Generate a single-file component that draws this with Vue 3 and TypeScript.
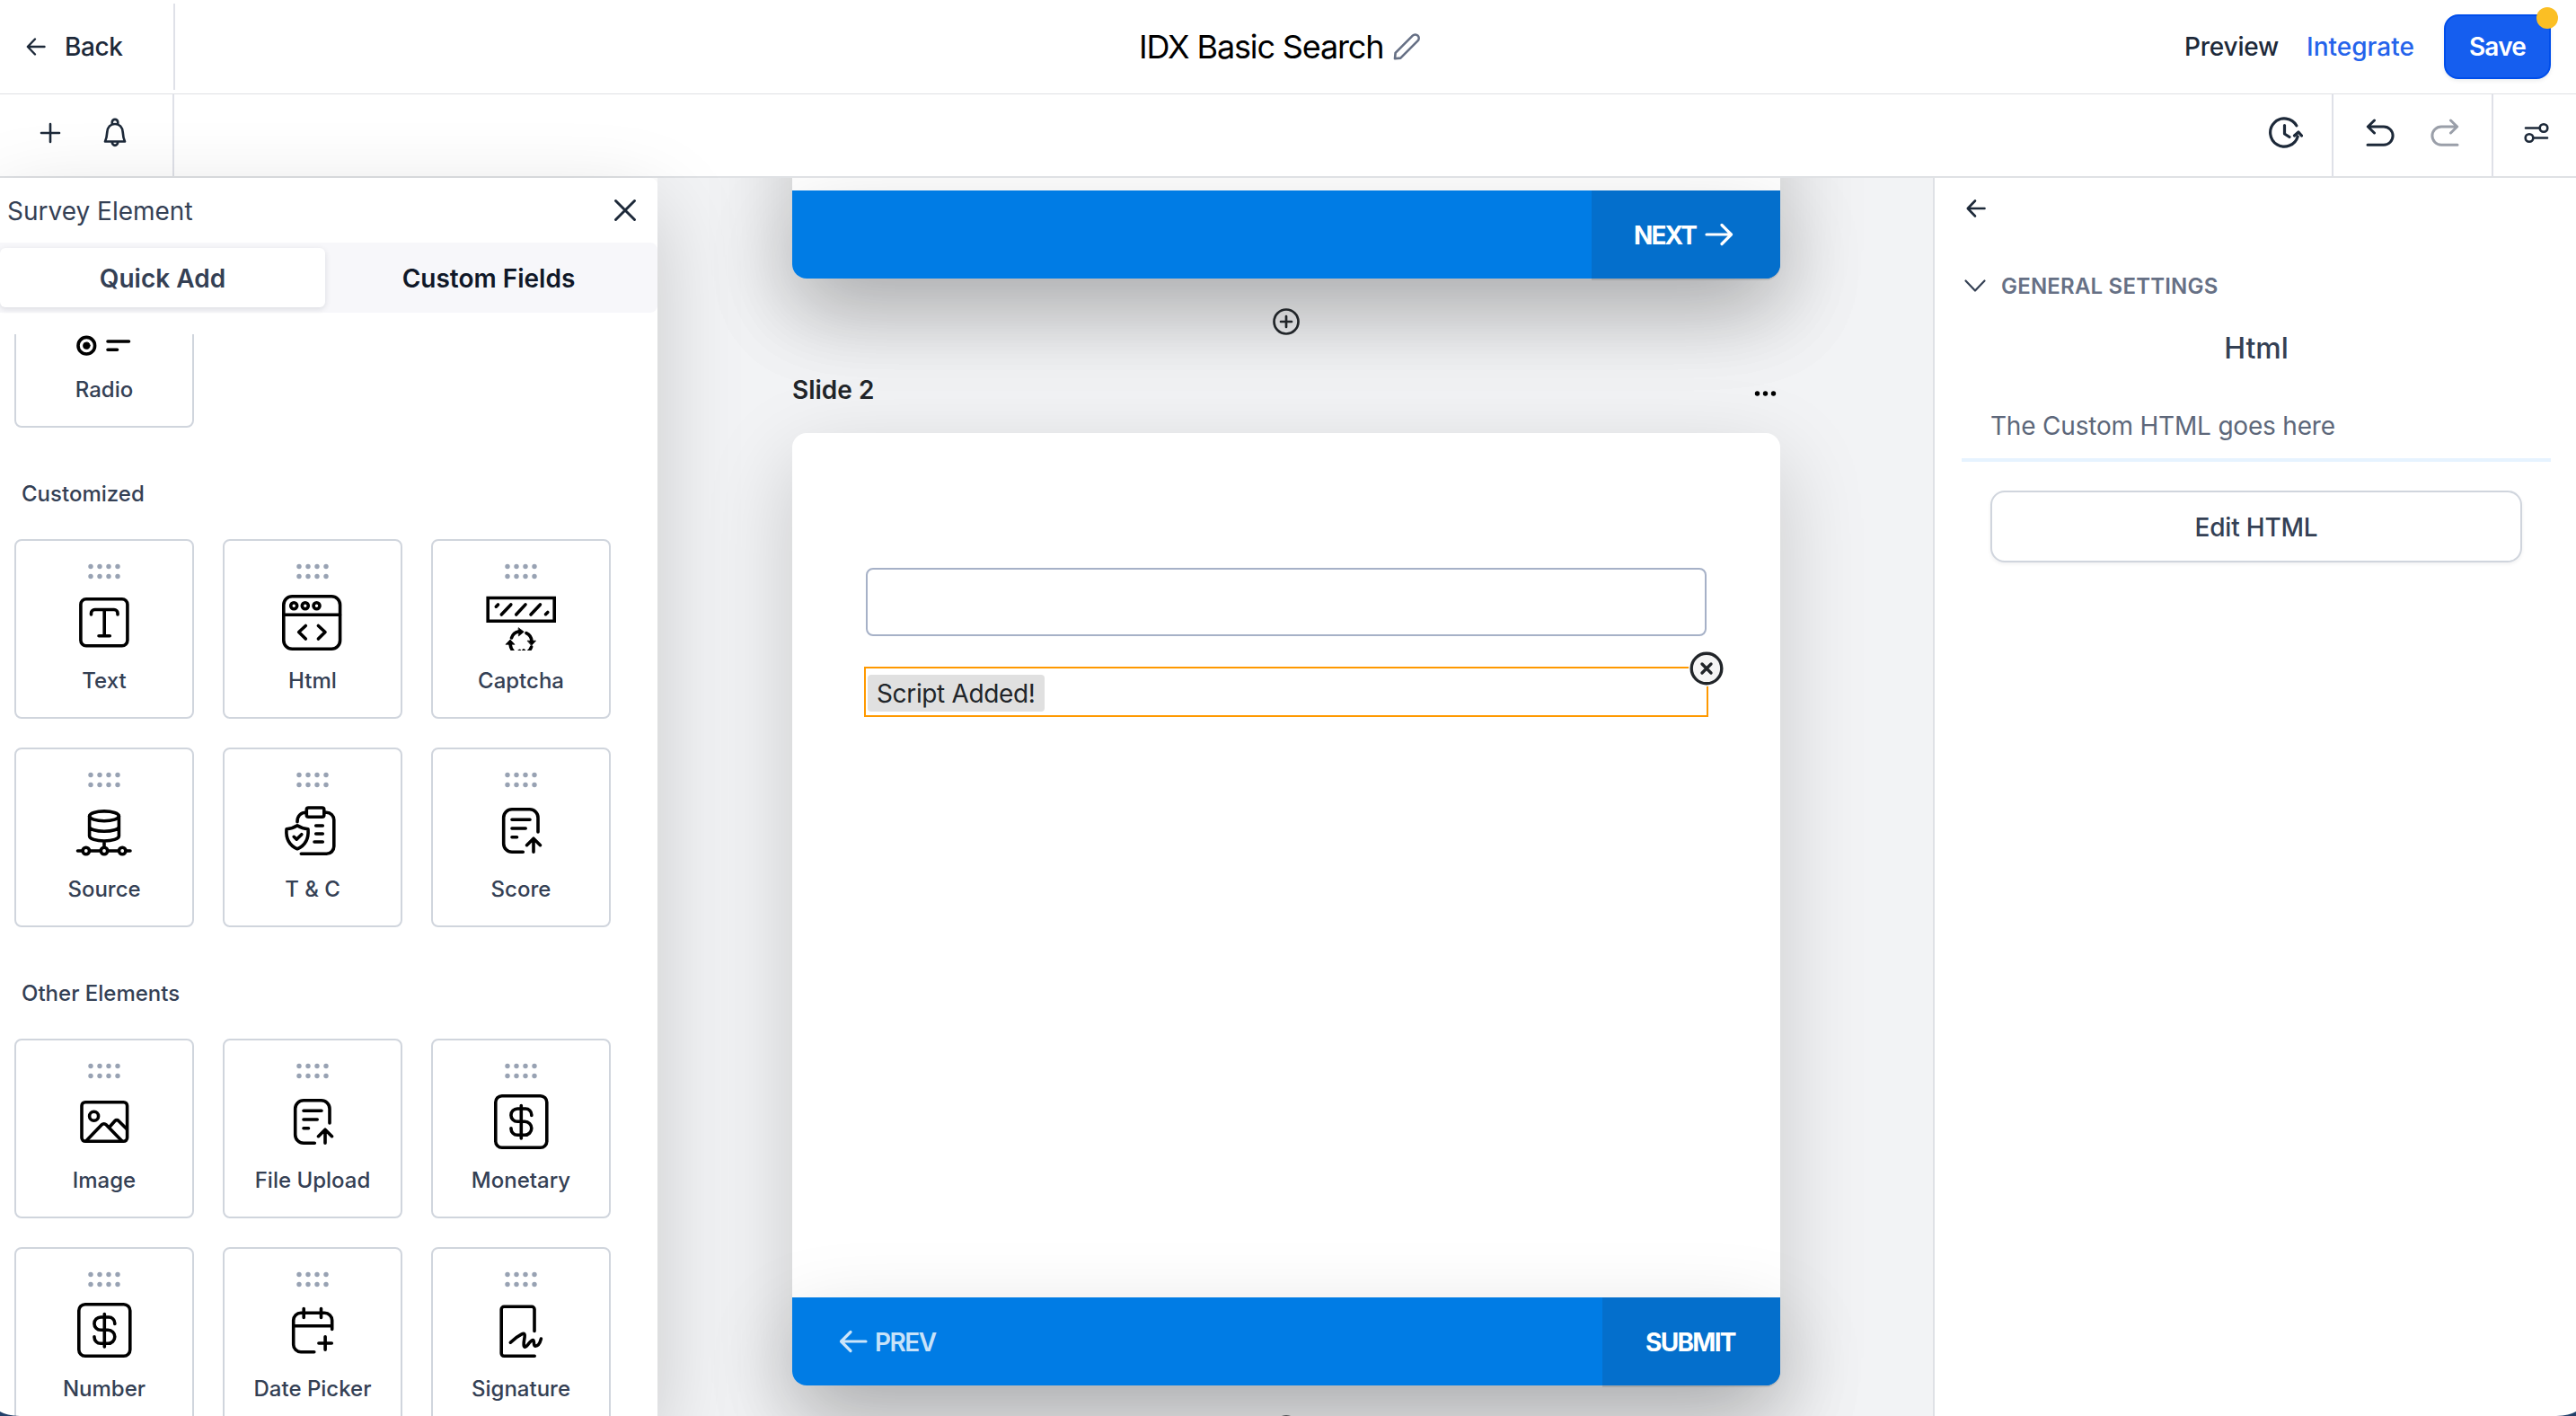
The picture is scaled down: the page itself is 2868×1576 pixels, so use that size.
<script setup lang="ts">
type Tile = { label: string; icon: string }
type Group = { title: string; tiles: Tile[] }

const doc =
  '<path d="M119 94V78a9.3 9.3 0 0 0-9.3-9.3H90a9.3 9.3 0 0 0-9.3 9.3v29a9.3 9.3 0 0 0 9.3 9.3h12.3M90 80.3h20M90 90h15.200M90 99.700h5.500M114 116.300V101.500M106.500 108.700l7.500-7.500 7.500 7.500"/>'
const dollar =
  '<rect x="71.800" y="63.700" width="57" height="57.500" rx="7"/><path d="M100.300 74.500v36.500M111.800 85.500v-.8a6.700 6.700 0 0 0-6.700-6.700h-9a7.150 7.150 0 0 0 0 14.300h8.200a7.500 7.500 0 0 1 0 15H96a7 7 0 0 1-7-7v-.6"/>'

const icons: Record<string, string> = {
  radio:
    '<circle cx="80.300" cy="108.700" r="9.300"/><circle cx="80.300" cy="108.700" r="3.800" class="solid"/><path d="M104 104h23.500M104 113.200h10.500"/>',
  text: '<rect x="73.900" y="66.800" width="52" height="52" rx="6"/><path d="M85.500 84v-1.500a4 4 0 0 1 4-4h21.500a4 4 0 0 1 4 4V84M100.200 78.500v29M94 107.700h12.300"/>',
  html: '<rect x="67.800" y="63.800" width="62.800" height="58.400" rx="9.500"/><path d="M68 84.300h62.500M92.300 96.500l-7.600 7 7.600 7.600M106.400 96.500l7.600 7-7.600 7.600"/><circle cx="79.200" cy="74.300" r="3.500"/><circle cx="91.800" cy="74.300" r="3.500"/><circle cx="104.500" cy="74.300" r="3.500"/>',
  captcha:
    '<path stroke-linejoin="miter" d="M63.200 65.500h74v25.700h-74z"/><path d="M88.800 72.900 78.300 84M105 72.900 94.700 84M121.400 72.900 111 84M74.500 73l-2.200 2.200M129.800 81.500l-2.300 2.200"/><path d="M89.500 110c1.200-4 4.200-6.500 8.500-7.300M106 104.600c3.600 1.700 5.700 4.700 6 8.900M88 117c.4 3.500 1.800 6.300 4.300 9M111.600 120c-.8 2.400-2.200 4.200-4 5.600M98.500 124.500l-2 1.500M103 124l1 1" /><path class="solid" stroke-width="1" stroke-linejoin="round" d="M97.500 98.900l5.700 4.300-5.500 4.500zM107.500 113.200h9l-4.700 5zM83.300 117l4.700-5 4.700 5z"/>',
  source:
    '<ellipse cx="100" cy="76.300" rx="16.400" ry="5.400"/><path d="M83.600 76.300V98.500c0 3.100 7.300 5.500 16.400 5.500s16.400-2.400 16.400-5.500V76.300M83.600 88c0 3.100 7.300 5.200 16.400 5.200s16.400-2.100 16.400-5.200M100 104v6.500M70.500 115h5.300M83.700 115h12.200M104 115h12.100M124 115h5"/><circle cx="79.800" cy="115" r="3.700"/><circle cx="100" cy="115" r="3.700"/><circle cx="120.200" cy="115" r="3.700"/>',
  terms:
    '<rect x="93.300" y="67" width="19.500" height="10.200" rx="2.200"/><path d="M93 72.300c-6 0-10 3.800-10 10.400M113 72.300h2.500a8.300 8.300 0 0 1 8.300 8.300V110a8.300 8.300 0 0 1-8.300 8.300H87.300M103.700 87h7.600M103.700 96h7.600M102 105h9.300M83 86.800c3.700 2.400 7.700 3.700 12 4 .9 10.500-2.300 17.700-12 22-9.700-4.300-12.900-11.500-12-22 4.300-.3 8.300-1.600 12-4zM79.200 99.300l3 2.900 5.600-5.500"/>',
  doc,
  image:
    '<rect x="75" y="70.700" width="50.600" height="43.600" rx="4"/><circle cx="88.600" cy="86.300" r="5"/><path d="M80 113.800 97.300 95.800a3.300 3.300 0 0 1 4.800 0L119.600 113.800M105.800 98.500l6.200-7a2.700 2.700 0 0 1 4 0l9 9"/>',
  dollar,
  date: '<path d="M121.700 91.500V81.600a8.300 8.300 0 0 0-8.300-8.300H87a8.300 8.300 0 0 0-8.300 8.300v26.800a8.300 8.300 0 0 0 8.300 8.300h14.800M79 87.700h42.500M90.200 68.500v10M109.500 68.500v10M114.100 99.800v14.400M106.900 107h14.400"/>',
  sign: '<path d="M115 93.500V69.300a3 3 0 0 0-3-3H81.200a3 3 0 0 0-3 3v49a3 3 0 0 0 3 3H115.200M88.300 106.200c5-5 9-7.600 12.600-9.400 3-1.400 3.700.3 3.200 3.500-.6 4-1.500 7.300-.7 9.800.7 2.200 2.600.6 4.300-1.500 2.500-3.100 4.200-5.400 5.700-5.100 2 .5 0 6.500 2.500 6.600 3.200.1 5.500-4.200 6.500-8"/>',
}

const groups: Group[] = [
  {
    title: 'Customized',
    tiles: [
      { label: 'Text', icon: 'text' },
      { label: 'Html', icon: 'html' },
      { label: 'Captcha', icon: 'captcha' },
      { label: 'Source', icon: 'source' },
      { label: 'T & C', icon: 'terms' },
      { label: 'Score', icon: 'doc' },
    ],
  },
  {
    title: 'Other Elements',
    tiles: [
      { label: 'Image', icon: 'image' },
      { label: 'File Upload', icon: 'doc' },
      { label: 'Monetary', icon: 'dollar' },
      { label: 'Number', icon: 'dollar' },
      { label: 'Date Picker', icon: 'date' },
      { label: 'Signature', icon: 'sign' },
    ],
  },
]
const dots = [0, 1, 2, 3]
</script>

<template>
  <div class="app">
    <header class="header">
      <div class="back">
        <svg width="22" height="24" viewBox="0 0 22 24" class="ln"><path d="M20.500 12H2M10 3.500 1.800 12l8.200 8.500" stroke-width="2.400" /></svg>
        <span>Back</span>
      </div>
      <div class="title">
        <span>IDX Basic Search</span>
        <svg width="32" height="32" viewBox="0 0 32 32" class="ln pencil"><path d="M3 29.300l.6-6.400L22.800 3.700a4 4 0 0 1 5.700 5.700L9.300 28.600z" stroke-width="2.600" /></svg>
      </div>
      <nav class="actions">
        <span class="preview">Preview</span>
        <span class="integrate">Integrate</span>
        <button class="save">Save<i class="badge"></i></button>
      </nav>
    </header>

    <div class="toolbar">
      <div class="tools-left">
        <svg width="24" height="24" viewBox="0 0 24 24" class="ln"><path d="M12 2v20M2 12h20" stroke-width="2.600" /></svg>
        <svg width="28" height="34" viewBox="0 0 28 34" class="ln">
          <path d="M3 26.500c1.700-3.500 2-6 2.300-10.500C5.800 10.500 9 7 14 7s8.200 3.500 8.700 9c.3 4.500.6 7 2.300 10.500zM10.800 7.500V5a3.200 3.200 0 0 1 6.400 0v2.500M10.800 27a3.200 3.800 0 0 0 6.400 0" stroke-width="2.700" />
        </svg>
      </div>
      <div class="tools-right">
        <div class="cell history">
          <svg width="40" height="40" viewBox="0 0 40 40" class="ln"><path d="M32.800 11.800A15.600 15.600 0 1 0 34.200 24M19.500 11.500v9.500l5.500 3.500M30.500 23l4.500-4 3.500 4" stroke-width="3.200" /></svg>
        </div>
        <div class="cell undo">
          <svg width="32" height="32" viewBox="0 0 32 32" class="ln"><path d="M9.500 2 2.300 9l7.200 7M2.500 9H20a10 10 0 0 1 0 20.200H2" stroke-width="3" /></svg>
          <svg width="32" height="32" viewBox="0 0 32 32" class="ln faded"><path d="M22.500 2l7.200 7-7.200 7M29.500 9H12a10 10 0 0 0 0 20.200h18" stroke-width="3" /></svg>
        </div>
        <div class="cell sliders">
          <svg width="28" height="24" viewBox="0 0 28 24" class="ln"><path d="M2 6.500h15M11 17.500h15" stroke-width="2.600" /><circle cx="22" cy="6.500" r="4.300" stroke-width="2.600" /><circle cx="6" cy="17.500" r="4.300" stroke-width="2.600" /></svg>
        </div>
      </div>
    </div>

    <main class="body">
      <aside class="sidebar">
        <div class="side-head">
          <span>Survey Element</span>
          <svg width="28" height="28" viewBox="0 0 28 28" class="ln"><path d="M3.500 3.500l21 21M24.500 3.500l-21 21" stroke-width="3" /></svg>
        </div>
        <div class="tabs">
          <div class="tab active">Quick Add</div>
          <div class="tab">Custom Fields</div>
        </div>
        <div class="palette">
          <div class="tiles first">
            <div class="tile">
              <svg class="glyph" width="120" height="124" viewBox="40 0 120 124" v-html="icons.radio"></svg>
              <span>Radio</span>
            </div>
          </div>
          <section v-for="g in groups" :key="g.title">
            <h3>{{ g.title }}</h3>
            <div class="tiles">
              <div v-for="t in g.tiles" :key="t.label" class="tile">
                <svg class="grip" width="40" height="18" viewBox="0 0 40 18">
                  <template v-for="d in dots" :key="d">
                    <circle :cx="5 + d * 10" cy="3.500" r="2.700" />
                    <circle :cx="5 + d * 10" cy="14.500" r="2.700" />
                  </template>
                </svg>
                <svg class="glyph" width="120" height="76" viewBox="40 48 120 76" v-html="icons[t.icon]"></svg>
                <span>{{ t.label }}</span>
              </div>
            </div>
          </section>
        </div>
      </aside>

      <section class="canvas">
        <div class="slide prior">
          <div class="foot">
            <span></span>
            <div class="go next">
              <span>NEXT</span>
              <svg width="32" height="28" viewBox="0 0 32 28" class="ln"><path d="M2 14h27M19 3.500 29.500 14 19 24.500" stroke-width="3.200" /></svg>
            </div>
          </div>
        </div>
        <svg class="add ln" width="32" height="32" viewBox="0 0 32 32"><circle cx="16" cy="16" r="13.500" stroke-width="2.700" /><path d="M16 10v12M10 16h12" stroke-width="2.700" /></svg>
        <div class="slide-head">
          <span>Slide 2</span>
          <svg width="28" height="8" viewBox="0 0 28 8"><circle cx="4.500" cy="4" r="2.700" /><circle cx="13.500" cy="4" r="2.700" /><circle cx="22.500" cy="4" r="2.700" /></svg>
        </div>
        <div class="slide">
          <div class="field"></div>
          <div class="script">
            <span>Script Added!</span>
            <svg class="remove ln" width="44" height="44" viewBox="0 0 44 44"><circle cx="22" cy="22" r="20" fill="#fff" stroke="none" /><circle cx="22" cy="22" r="16.800" fill="#f5f5f5" stroke-width="3.400" /><path d="M17 17l10 10M27 17l-10 10" stroke-width="3.400" /></svg>
          </div>
          <div class="foot">
            <div class="prev">
              <svg width="32" height="28" viewBox="0 0 32 28" class="ln"><path d="M30 14H3M13 3.500 2.500 14 13 24.500" stroke-width="3.200" /></svg>
              <span>PREV</span>
            </div>
            <div class="go submit"><span>SUBMIT</span></div>
          </div>
        </div>
        <svg class="add ln" width="32" height="32" viewBox="0 0 32 32"><circle cx="16" cy="16" r="13.500" stroke-width="2.700" /><path d="M16 10v12M10 16h12" stroke-width="2.700" /></svg>
      </section>

      <aside class="settings">
        <svg class="ln dark" width="24" height="24" viewBox="0 0 24 24"><path d="M21.500 12H3M11 3.500 2.800 12l8.200 8.500" stroke-width="2.600" /></svg>
        <div class="accordion">
          <svg width="26" height="16" viewBox="0 0 26 16" class="ln"><path d="M2.500 2.500 13 13.500 23.500 2.500" stroke-width="2.200" /></svg>
          <span>GENERAL SETTINGS</span>
        </div>
        <h2>Html</h2>
        <p><span>The Custom HTML goes here</span></p>
        <button class="edit"><span>Edit HTML</span></button>
      </aside>
    </main>
    <svg class="corner left" width="22" height="5" viewBox="0 0 22 5"><path d="M0 0c5 3 12 4.500 22 5H0z" /></svg>
    <svg class="corner right" width="22" height="5" viewBox="0 0 22 5"><path d="M22 0C17 3 10 4.500 0 5h22z" /></svg>
  </div>
</template>

<style>
body {
  margin: 0;
  overflow: hidden;
}
</style>

<style scoped>
.app {
  position: relative;
  width: 2868px;
  height: 1576px;
  overflow: hidden;
  display: flex;
  flex-direction: column;
  background: #fff;
  color: #1d2939;
  font-family: Inter, 'Liberation Sans', sans-serif;
  font-size: 28px;
  line-height: 40px;
}
.app *,
.app :deep(*) {
  box-sizing: border-box;
}
svg {
  display: block;
  flex: none;
}
.ln {
  fill: none;
  stroke: currentColor;
  stroke-linecap: round;
  stroke-linejoin: round;
}
button {
  font: inherit;
}
.header {
  position: relative;
  z-index: 3;
  height: 105px;
  flex: none;
  display: flex;
  align-items: flex-start;
  background: #fff;
  border-bottom: 1px solid #dfe1e4;
}
.back {
  width: 195px;
  height: 96px;
  margin-top: 4px;
  display: flex;
  align-items: center;
  gap: 21px;
  padding-left: 29px;
  border-right: 2px solid #dfe1e8;
  font-weight: 500;
  letter-spacing: -0.4px;
}
.title {
  height: 104px;
  display: flex;
  align-items: center;
  gap: 8px;
  margin: 0 auto 0 1073px;
  font-size: 36px;
  color: #000;
}
.title span {
  width: 274px;
  white-space: nowrap;
  letter-spacing: -1.15px;
}
.pencil {
  color: #667085;
}
.actions {
  height: 104px;
  display: flex;
  align-items: center;
  padding-right: 28px;
  font-weight: 500;
}
.preview {
  width: 136px;
  letter-spacing: -0.2px;
}
.integrate {
  width: 153px;
  color: #2563eb;
}
.save {
  position: relative;
  width: 119px;
  height: 72px;
  padding: 0;
  border: 2px solid #004eeb;
  border-radius: 16px;
  background: #155eef;
  color: #fff;
  font-weight: 600;
  letter-spacing: -0.8px;
  box-shadow: 0 2px 4px rgba(16, 24, 40, 0.08);
}
.badge {
  position: absolute;
  top: -10px;
  right: -10px;
  width: 24px;
  height: 24px;
  border-radius: 50%;
  background: #fbbf24;
}
.toolbar {
  position: relative;
  z-index: 1;
  height: 93px;
  flex: none;
  display: flex;
  justify-content: space-between;
  background: #fff;
  border-bottom: 2px solid #dfe1e4;
}
.tools-left {
  width: 194px;
  display: flex;
  align-items: center;
  gap: 46px;
  padding: 0 0 5px 44px;
  border-right: 2px solid #dfe1e8;
}
.tools-right {
  display: flex;
}
.cell {
  display: flex;
  align-items: center;
  padding-bottom: 5px;
}
.history {
  width: 72px;
}
.undo {
  width: 180px;
  padding-left: 36px;
  gap: 40px;
  border-left: 2px solid #dfe1e8;
  border-right: 2px solid #dfe1e8;
}
.sliders {
  width: 92px;
  padding-left: 34px;
}
.faded {
  color: #9a9fa9;
}
.body {
  flex: 1;
  min-height: 0;
  display: flex;
}
.sidebar {
  position: relative;
  z-index: 2;
  width: 732px;
  flex: none;
  display: flex;
  flex-direction: column;
  background: #fff;
  border-radius: 0 8px 0 0;
  box-shadow: 0 32px 96px rgba(0, 0, 0, 0.175);
}
.side-head {
  height: 72px;
  flex: none;
  display: flex;
  align-items: center;
  justify-content: space-between;
  padding: 0 22px 0 8px;
  color: #344054;
}
.side-head span {
  padding-top: 2px;
}
.side-head svg {
  color: #1d2939;
}
.tabs {
  height: 78px;
  flex: none;
  display: flex;
  align-items: center;
  background: #f7f7fa;
  border-radius: 0 8px 8px 0;
  font-weight: 600;
  text-align: center;
  color: #101828;
}
.tab {
  width: 364px;
  height: 66px;
  line-height: 68px;
}
.tab.active {
  width: 362px;
  background: #fff;
  border-radius: 6px;
  color: #344054;
  box-shadow: 0 2px 6px rgba(16, 24, 40, 0.12);
}
.palette {
  flex: 1;
  min-height: 0;
  overflow: hidden;
  margin-top: 24px;
  padding-left: 16px;
}
.tiles {
  display: grid;
  grid-template-columns: repeat(3, 200px);
  gap: 32px;
}
.tiles.first {
  margin-top: -96px;
}
.tile {
  height: 200px;
  border: 2px solid #d0d5dd;
  border-radius: 8px;
  display: flex;
  flex-direction: column;
  align-items: center;
  font-size: 24px;
  font-weight: 500;
  color: #344054;
  overflow: hidden;
}
.tiles.first .glyph {
  margin-top: -2px;
}
.grip {
  margin-top: 24.500px;
  fill: #98a2b3;
}
.glyph {
  margin-top: 3.500px;
  color: #000;
  fill: none;
  stroke: #000;
  stroke-width: 3.600;
  stroke-linecap: round;
  stroke-linejoin: round;
}
.glyph :deep(.solid) {
  fill: #000;
  stroke-width: 0.8;
}
.tile span {
  margin-top: 14px;
}
h3 {
  height: 124px;
  margin: 0;
  padding: 54px 0 0 8px;
  font-size: 24px;
  font-weight: 500;
  color: #344054;
}
.canvas {
  width: 1420px;
  flex: none;
  overflow: hidden;
  display: flex;
  flex-direction: column;
  padding: 0 170px 0 150px;
  background: #f2f3f5;
  color: #212529;
}
.slide {
  width: 1100px;
  height: 1060px;
  flex: none;
  display: flex;
  flex-direction: column;
  background: #fff;
  border-radius: 16px;
  box-shadow: 0 32px 96px rgba(0, 0, 0, 0.175);
}
.slide.prior {
  margin-top: -948px;
}
.foot {
  height: 98px;
  flex: none;
  margin-top: auto;
  display: flex;
  justify-content: space-between;
  border-radius: 0 0 16px 16px;
  background: #007ce5;
  color: #fff;
  font-weight: 700;
  box-shadow: 0 32px 96px rgba(0, 0, 0, 0.175);
}
.foot span {
  padding-top: 1px;
}
.go {
  display: flex;
  align-items: center;
  background: #046fcc;
  border-radius: 0 0 16px 0;
  box-shadow: 0 2px 0 rgba(0, 0, 0, 0.1);
}
.go.next {
  width: 210px;
  padding-left: 47px;
}
.next span {
  width: 79px;
  letter-spacing: -1.9px;
}
.go.submit {
  width: 198px;
  padding-left: 48px;
  letter-spacing: -1.7px;
}
.prev {
  display: flex;
  align-items: center;
  gap: 8px;
  padding-left: 52px;
  color: rgba(255, 255, 255, 0.8);
  font-weight: 600;
  letter-spacing: -1.5px;
}
.add {
  margin: 32px auto 0;
}
.slide-head {
  height: 60px;
  flex: none;
  margin: 30px 0 18px;
  display: flex;
  align-items: center;
  justify-content: space-between;
  font-weight: 600;
}
.slide-head svg {
  margin: 8px 2px 0 0;
}
.field {
  width: 936px;
  height: 76px;
  margin: 150px 0 0 82px;
  border: 2px solid #a6b1c7;
  border-radius: 8px;
}
.script {
  position: relative;
  width: 940px;
  height: 56px;
  margin: 34px 0 0 80px;
  padding: 7px 0 0 2px;
  border: 2px solid #ff9900;
}
.script span {
  display: block;
  width: 197px;
  height: 41px;
  padding-left: 10px;
  line-height: 42px;
  letter-spacing: -0.35px;
  border-radius: 4px;
  background: #e0e0e0;
  white-space: nowrap;
}
.remove {
  position: absolute;
  top: -22px;
  right: -22px;
}
.settings {
  flex: 1;
  display: flex;
  flex-direction: column;
  padding: 22px 28px 0 30px;
  border-left: 2px solid #dfe1e6;
  background: #fff;
}
.settings > svg {
  margin-left: 4px;
}
.accordion {
  display: flex;
  align-items: center;
  gap: 16px;
  height: 40px;
  margin: 54px 0 0 2px;
  font-size: 24px;
  font-weight: 600;
  letter-spacing: 0.2px;
  color: #667085;
}
.accordion span {
  padding-top: 2px;
}
.accordion svg {
  color: #344054;
}
h2 {
  margin: 30px 0 0;
  font-size: 32px;
  font-weight: 500;
  line-height: 40px;
  text-align: center;
  color: #344054;
}
p {
  height: 60px;
  margin: 46px 0 0;
  padding-left: 32px;
  border-bottom: 4px solid #e6f3ff;
  letter-spacing: -0.2px;
  color: #5d677a;
}
.edit {
  height: 80px;
  margin: 32px 32px 0;
  padding: 1px 0 0;
  border: 2px solid #d0d5dd;
  border-radius: 16px;
  background: #fff;
  color: #344054;
  font-weight: 500;
  letter-spacing: -0.2px;
  box-shadow: 0 2px 4px rgba(16, 24, 40, 0.06);
}
.corner {
  position: absolute;
  z-index: 4;
  bottom: 0;
  fill: #22406a;
}
.corner.left {
  left: 0;
}
.corner.right {
  right: 0;
}
</style>
